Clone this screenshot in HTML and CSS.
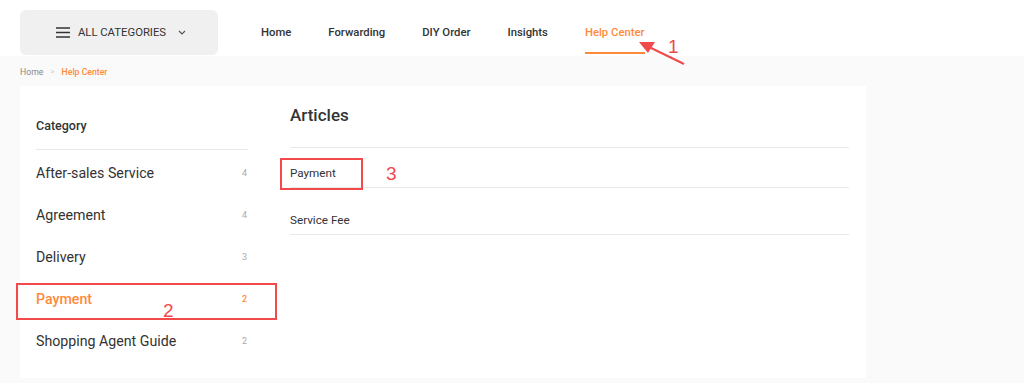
FILE: index.html
```html
<!DOCTYPE html>
<html lang="en">
<head>
  <meta charset="UTF-8">
  <title>Help Center</title>
  <link rel="stylesheet" href="styles.css">
</head>
<body>
  <div class="page">
    <header class="topbar">
      <div class="all-categories">
        <svg class="burger" width="14" height="11" viewBox="0 0 14 11">
          <path d="M0 1h14M0 5.5h14M0 10h14" stroke="#333" stroke-width="1.6"/>
        </svg>
        <span>ALL CATEGORIES</span>
        <svg class="chevron" width="8" height="5" viewBox="0 0 8 5">
          <path d="M1 1l3 3 3-3" stroke="#555" stroke-width="1.2" fill="none"/>
        </svg>
      </div>
      <nav class="nav">
        <a>Home</a>
        <a>Forwarding</a>
        <a>DIY Order</a>
        <a>Insights</a>
        <a class="active">Help Center</a>
      </nav>
    </header>

    <main class="content">
      <div class="breadcrumb">
        <span>Home</span>
        <span class="sep">&gt;</span>
        <span class="current">Help Center</span>
      </div>

      <div class="card">
        <aside class="sidebar">
          <div class="sidebar-title">Category</div>
          <div class="cat"><span>After-sales Service</span><span class="count">4</span></div>
          <div class="cat"><span>Agreement</span><span class="count">4</span></div>
          <div class="cat"><span>Delivery</span><span class="count">3</span></div>
          <div class="cat active"><span>Payment</span><span class="count">2</span></div>
          <div class="cat"><span>Shopping Agent Guide</span><span class="count">2</span></div>
        </aside>
        <section class="articles">
          <h2>Articles</h2>
          <div class="article">Payment</div>
          <div class="article">Service Fee</div>
        </section>
      </div>
    </main>

    <!-- annotations -->
    <div class="mark box-2"></div>
    <div class="mark box-3"></div>
    <span class="num num-1">1</span>
    <span class="num num-2">2</span>
    <span class="num num-3">3</span>
    <svg class="arrow" width="52" height="30" viewBox="0 0 52 30">
      <path d="M47 25L10 7" stroke="#f2494b" stroke-width="2"/>
      <path d="M2 3l16 0-7 11z" fill="#f2494b"/>
    </svg>
  </div>
</body>
</html>
```

FILE: styles.css
```css
* {
  box-sizing: border-box;
  margin: 0;
  padding: 0;
}

body {
  font-family: Roboto, "Liberation Sans", sans-serif;
  color: #333333;
  background: #fafafa;
}

.page {
  position: relative;
  width: 1024px;
  height: 383px;
  overflow: hidden;
}

.topbar {
  height: 56px;
  background: #ffffff;
  display: flex;
  align-items: flex-start;
  padding-left: 20px;
}

.all-categories {
  width: 198px;
  height: 45px;
  margin-top: 10px;
  background: #f0f0f0;
  border-radius: 6px;
  display: flex;
  align-items: center;
  justify-content: center;
  gap: 8px;
  font-size: 11.3px;
  color: #333333;
  padding-left: 4px;
}

.chevron {
  margin-left: 4px;
}

.nav {
  display: flex;
  margin-left: 43px;
  gap: 37px;
}

.nav a {
  font-size: 11.3px;
  font-weight: 500;
  color: #333333;
  height: 54px;
  padding-top: 26px;
  border-bottom: 2px solid transparent;
}

.nav a.active {
  color: #ff8a3b;
  border-bottom-color: #ff8a3b;
}

.content {
  padding: 0 20px;
}

.breadcrumb {
  height: 30px;
  display: flex;
  align-items: center;
  gap: 6px;
  font-size: 8.7px;
  color: #888888;
  padding-top: 1px;
}

.breadcrumb .sep {
  color: #cccccc;
  font-size: 8px;
  padding: 0 1px;
}

.breadcrumb .current {
  color: #ff8a3b;
  font-weight: 500;
}

.card {
  width: 846px;
  height: 292px;
  background: #ffffff;
  display: flex;
  padding: 0 17px 0 16px;
  gap: 42px;
}

.sidebar {
  width: 212px;
}

.sidebar-title {
  font-size: 12.5px;
  font-weight: 500;
  height: 64px;
  padding-top: 32px;
  border-bottom: 1px solid #e8e8e8;
}

.cat {
  height: 42px;
  display: flex;
  align-items: center;
  justify-content: space-between;
  font-size: 14.2px;
  color: #333333;
  padding-top: 3px;
}

.cat .count {
  font-size: 9px;
  color: #aaaaaa;
  padding-right: 1px;
}

.cat.active,
.cat.active .count {
  color: #ff8a3b;
  font-weight: 500;
}

.articles {
  flex: 1;
}

.articles h2 {
  font-size: 17px;
  font-weight: 500;
  height: 62px;
  padding-top: 19px;
  border-bottom: 1px solid #e8e8e8;
}

.article {
  font-size: 11.7px;
  height: 40px;
  padding-top: 18px;
  border-bottom: 1px solid #e8e8e8;
}

.article + .article {
  height: 47px;
  padding-top: 25px;
}

.mark {
  position: absolute;
  border: 2px solid #f2494b;
}

.box-2 {
  left: 16px;
  top: 283px;
  width: 261px;
  height: 37px;
}

.box-3 {
  left: 280px;
  top: 158px;
  width: 83px;
  height: 32px;
}

.num {
  position: absolute;
  color: #f2494b;
  font-family: "Liberation Sans", sans-serif;
  font-size: 19px;
  line-height: 1;
}

.num-1 {
  left: 668px;
  top: 37px;
}

.num-2 {
  left: 163px;
  top: 301px;
}

.num-3 {
  left: 386px;
  top: 164px;
}

.arrow {
  position: absolute;
  left: 637px;
  top: 39px;
}
```
